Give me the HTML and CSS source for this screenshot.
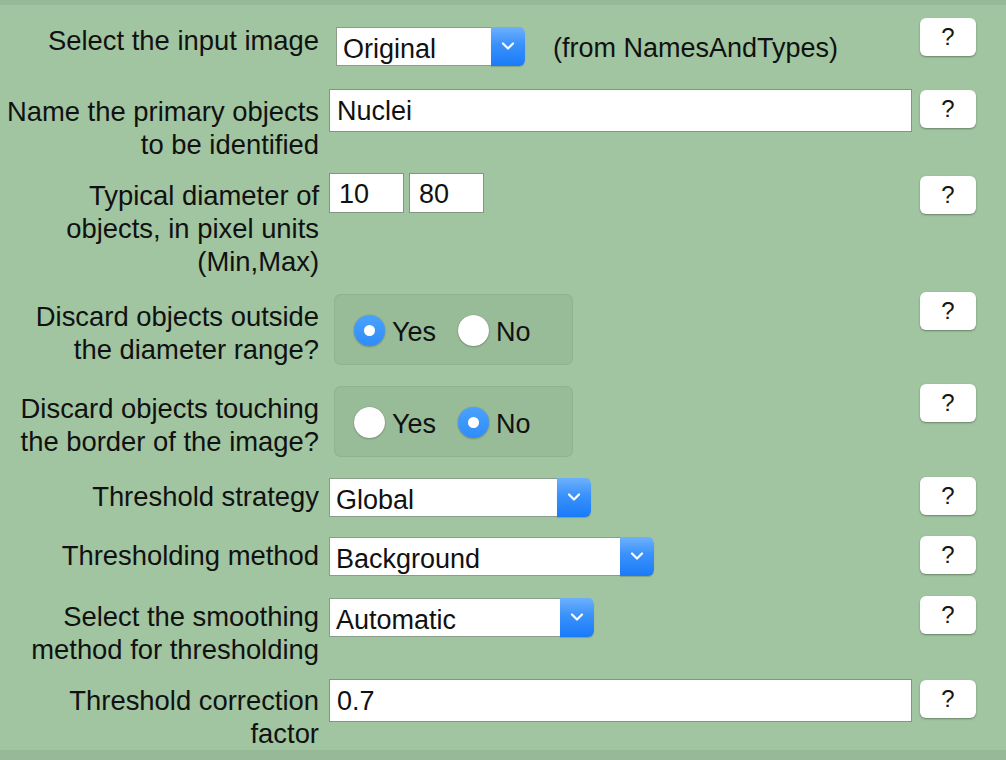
FILE: index.html
```html
<!DOCTYPE html>
<html>
<head>
<meta charset="utf-8">
<link rel="stylesheet" href="styles.css">
</head>
<body>
<div class="top-strip"></div>
<main class="form">
  <div class="row row-1">
    <div class="lbl lbl-a">Select the input image</div>
    <div class="ctl">
      <div class="select select-first w-original">
        <span class="sel-text">Original</span>
        <span class="sel-btn"><svg width="14" height="9" viewBox="0 0 14 9"><polyline points="2,1.5 7,6.5 12,1.5" fill="none" stroke="#fff" stroke-width="2.2" stroke-linecap="round" stroke-linejoin="round"/></svg></span>
      </div>
      <span class="note">(from NamesAndTypes)</span>
    </div>
    <button class="help">?</button>
  </div>

  <div class="row row-2">
    <div class="lbl lbl-b">Name the primary objects<br>to be identified</div>
    <div class="ctl">
      <div class="text-input full">Nuclei</div>
    </div>
    <button class="help help-low">?</button>
  </div>

  <div class="row row-3">
    <div class="lbl lbl-b">Typical diameter of<br>objects, in pixel units<br>(Min,Max)</div>
    <div class="ctl ctl-pair">
      <div class="text-input small">10</div>
      <div class="text-input small">80</div>
    </div>
    <button class="help help-lower">?</button>
  </div>

  <div class="row row-4">
    <div class="lbl lbl-c">Discard objects outside<br>the diameter range?</div>
    <div class="ctl">
      <div class="radio-box">
        <span class="radio on"></span><span class="radio-label">Yes</span>
        <span class="radio"></span><span class="radio-label">No</span>
      </div>
    </div>
    <button class="help">?</button>
  </div>

  <div class="row row-5">
    <div class="lbl lbl-c">Discard objects touching<br>the border of the image?</div>
    <div class="ctl">
      <div class="radio-box">
        <span class="radio"></span><span class="radio-label">Yes</span>
        <span class="radio on"></span><span class="radio-label">No</span>
      </div>
    </div>
    <button class="help">?</button>
  </div>

  <div class="row row-6">
    <div class="lbl lbl-d">Threshold strategy</div>
    <div class="ctl">
      <div class="select select-mid w-global">
        <span class="sel-text">Global</span>
        <span class="sel-btn"><svg width="14" height="9" viewBox="0 0 14 9"><polyline points="2,1.5 7,6.5 12,1.5" fill="none" stroke="#fff" stroke-width="2.2" stroke-linecap="round" stroke-linejoin="round"/></svg></span>
      </div>
    </div>
    <button class="help">?</button>
  </div>

  <div class="row row-7">
    <div class="lbl lbl-d">Thresholding method</div>
    <div class="ctl">
      <div class="select select-mid w-background">
        <span class="sel-text">Background</span>
        <span class="sel-btn"><svg width="14" height="9" viewBox="0 0 14 9"><polyline points="2,1.5 7,6.5 12,1.5" fill="none" stroke="#fff" stroke-width="2.2" stroke-linecap="round" stroke-linejoin="round"/></svg></span>
      </div>
    </div>
    <button class="help">?</button>
  </div>

  <div class="row row-8">
    <div class="lbl lbl-d">Select the smoothing<br>method for thresholding</div>
    <div class="ctl">
      <div class="select select-mid w-automatic">
        <span class="sel-text">Automatic</span>
        <span class="sel-btn"><svg width="14" height="9" viewBox="0 0 14 9"><polyline points="2,1.5 7,6.5 12,1.5" fill="none" stroke="#fff" stroke-width="2.2" stroke-linecap="round" stroke-linejoin="round"/></svg></span>
      </div>
    </div>
    <button class="help">?</button>
  </div>

  <div class="row row-9">
    <div class="lbl lbl-e">Threshold correction<br>factor</div>
    <div class="ctl">
      <div class="text-input full">0.7</div>
    </div>
    <button class="help help-low">?</button>
  </div>
</main>
<div class="bottom-strip"></div>
</body>
</html>
```

FILE: styles.css
```css
* { box-sizing: border-box; }

html, body {
  margin: 0;
  padding: 0;
}

body {
  width: 1006px;
  height: 760px;
  overflow: hidden;
  background: #a0c5a0;
  font-family: "Liberation Sans", Arial, sans-serif;
  font-size: 27px;
  line-height: 33px;
  color: #111;
}

.top-strip {
  height: 5px;
  background: #97b997;
}

.bottom-strip {
  height: 10px;
  background: #97b997;
}

.form {
  display: flex;
  flex-direction: column;
  padding: 13px 30px 0 0;
  height: 745px;
}

.row {
  display: flex;
  align-items: flex-start;
}

.row-2 { margin-top: 23px; }
.row-3 { margin-top: 12px; }
.row-4 { margin-top: 14px; }
.row-5 { margin-top: 18px; }
.row-6 { margin-top: 19px; }
.row-7 { margin-top: 19px; }
.row-8 { margin-top: 20px; }
.row-9 { margin-top: 13px; }

.lbl {
  width: 319px;
  flex: none;
  text-align: right;
  white-space: nowrap;
  font-size: 27.4px;
  line-height: 33px;
}

.lbl-a { margin-top: 6px; }
.lbl-b { margin-top: 6px; }
.lbl-c { margin-top: 8px; }
.lbl-d { margin-top: 3px; }
.lbl-e { margin-top: 5px; }

.row-8 .lbl-d { margin-top: 4px; }
.row-8 .select-mid { margin-top: 2px; }

.ctl {
  flex: 1;
  margin-left: 10px;
  display: flex;
  align-items: flex-start;
}

.ctl-pair { gap: 5px; }

.help {
  flex: none;
  width: 56px;
  height: 38px;
  margin-left: 8px;
  border: none;
  border-radius: 6px;
  background: #fff;
  box-shadow: 0 1px 2px rgba(0, 0, 0, 0.35);
  font-family: "Liberation Sans", Arial, sans-serif;
  font-size: 24px;
  line-height: 38px;
  color: #151515;
  padding: 0 0 3px 0;
  text-align: center;
}

.help-low { margin-top: 1px; }
.help-lower { margin-top: 3px; }

/* select */
.select {
  display: flex;
  height: 39px;
  background: #fff;
  border: 1px solid #8a9c8a;
  border-right: none;
  border-radius: 0 6px 6px 0;
}

.select-first { margin-top: 9px; margin-left: 7px; }
.select-mid { margin-top: 1px; }

.w-original { width: 189px; }
.w-global { width: 262px; }
.w-background { width: 325px; }
.w-automatic { width: 265px; }

.sel-text {
  flex: 1;
  padding: 5px 0 0 6px;
  line-height: 33px;
  white-space: nowrap;
}

.sel-btn {
  flex: none;
  width: 34px;
  margin: -1px 0 -1px 0;
  border-radius: 0 6px 6px 0;
  background: linear-gradient(to bottom, #6db1fd 0%, #3a91fb 45%, #1a7bf8 100%);
  box-shadow: 0 1px 1px rgba(0, 0, 0, 0.18);
  display: flex;
  align-items: center;
  justify-content: center;
}

.sel-btn svg { display: block; }

/* text inputs */
.text-input {
  height: 43px;
  background: #fff;
  border: 1px solid #7f977f;
  padding: 5px 0 0 7px;
  line-height: 33px;
}

.text-input.full { width: 583px; }

.text-input.small {
  width: 75px;
  height: 40px;
  padding: 4px 0 0 9px;
}

/* note */
.note {
  margin-top: 14px;
  margin-left: 28px;
  line-height: 33px;
}

/* radio group */
.radio-box {
  margin-top: 2px;
  margin-left: 5px;
  width: 239px;
  height: 71px;
  border-radius: 7px;
  background: #98bb98;
  box-shadow: inset 0 0 0 1px rgba(120, 150, 120, 0.25);
  display: flex;
  align-items: center;
  padding: 6px 0 0 20px;
}

.radio {
  width: 31px;
  height: 31px;
  border-radius: 50%;
  background: #fff;
  box-shadow: 0 0 1px rgba(0, 0, 0, 0.35), 0 1px 2px rgba(0, 0, 0, 0.2);
  flex: none;
  position: relative;
  margin-top: -4px;
}

.radio.on {
  background: linear-gradient(to bottom, #4aa2fd, #2f8cf8);
}

.radio.on::after {
  content: "";
  position: absolute;
  left: 10px;
  top: 10px;
  width: 11px;
  height: 11px;
  border-radius: 50%;
  background: #fff;
}

.radio-label {
  margin-left: 7px;
  margin-right: 22px;
}
```
